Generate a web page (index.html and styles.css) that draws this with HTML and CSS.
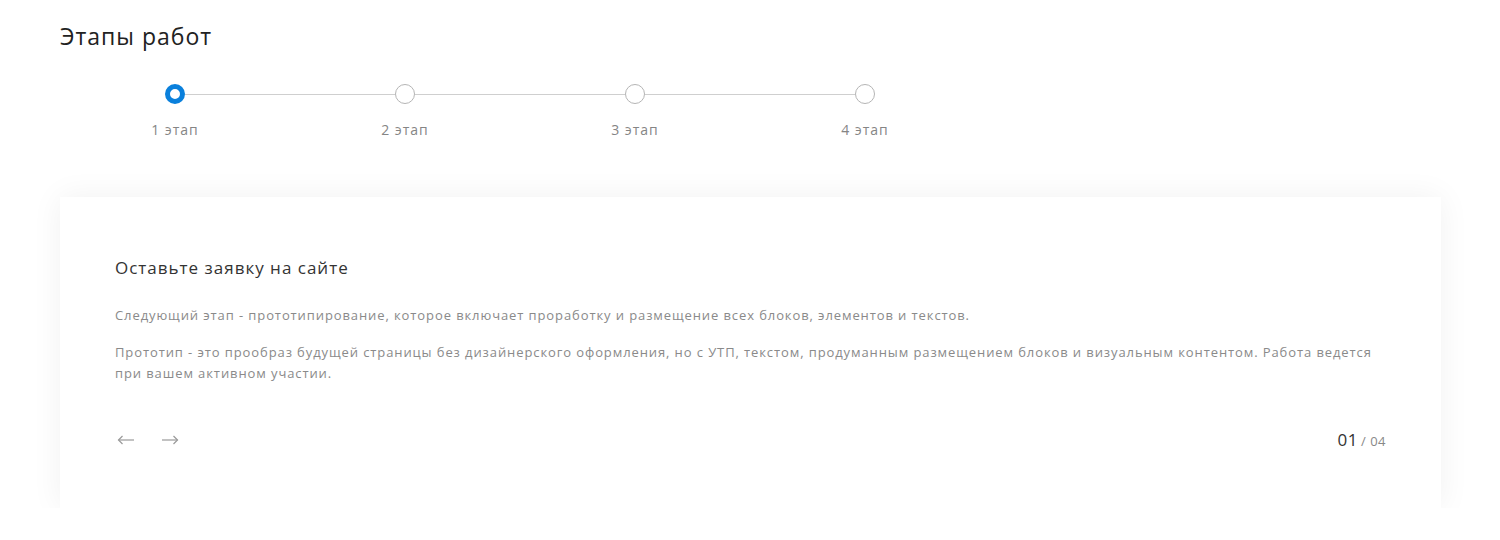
FILE: index.html
```html
<!DOCTYPE html>
<html lang="ru">

<head>
    <meta charset="UTF-8">
    <meta name="viewport" content="width=device-width, initial-scale=1.0">
    <title>Этапы работ</title>
    <link rel="stylesheet" href="styles.css">
</head>

<body>
    <section class="stages">
        <h2 class="stagesTitle">Этапы работ</h2>

        <div class="stepper">
            <div class="step active">
                <span class="stepDot"></span>
                <span class="stepLabel">1 этап</span>
            </div>
            <div class="step">
                <span class="stepDot"></span>
                <span class="stepLabel">2 этап</span>
            </div>
            <div class="step">
                <span class="stepDot"></span>
                <span class="stepLabel">3 этап</span>
            </div>
            <div class="step last">
                <span class="stepDot"></span>
                <span class="stepLabel">4 этап</span>
            </div>
        </div>

        <div class="stageCard">
            <h3 class="cardTitle">Оставьте заявку на сайте</h3>
            <p class="cardText">Следующий этап - прототипирование, которое включает проработку и размещение всех блоков, элементов и текстов.</p>
            <p class="cardText">Прототип - это прообраз будущей страницы без дизайнерского оформления, но с УТП, текстом, продуманным размещением блоков и визуальным контентом. Работа ведется при вашем активном участии.</p>

            <div class="cardFooter">
                <div class="arrows">
                    <button class="arrowBtn" aria-label="Назад">
                        <svg width="18" height="10" viewBox="0 0 18 10" fill="none" stroke="#9a9a9a" stroke-width="1.2">
                            <path d="M17 5H1.5"/>
                            <path d="M5.5 1L1.5 5l4 4"/>
                        </svg>
                    </button>
                    <button class="arrowBtn" aria-label="Вперед">
                        <svg width="18" height="10" viewBox="0 0 18 10" fill="none" stroke="#9a9a9a" stroke-width="1.2">
                            <path d="M1 5h15.5"/>
                            <path d="M12.5 1l4 4-4 4"/>
                        </svg>
                    </button>
                </div>
                <div class="counter"><span class="counterCurrent">01</span><span class="counterTotal">/ 04</span></div>
            </div>
        </div>
    </section>
</body>

</html>
```

FILE: styles.css
```css
body {
    margin: 0;
    font-family: 'Open Sans', 'Noto Sans', sans-serif;
    background-color: #fff;
    color: #333;
}

.stages {
    padding: 22px 59px 0 60px;
}

.stagesTitle {
    margin: 0;
    font-size: 23px;
    font-weight: 400;
    line-height: 28px;
    color: #222;
    letter-spacing: 1px;
}

.stepper {
    display: grid;
    grid-template-columns: repeat(4, 230px);
    margin: 34px 0 0 0;
}

.step {
    display: flex;
    flex-direction: column;
    align-items: center;
    position: relative;
}

.step::after {
    content: '';
    position: absolute;
    top: 10px;
    left: calc(50% + 10px);
    width: 210px;
    height: 1px;
    background-color: #cfcfcf;
}

.step.last::after {
    display: none;
}

.stepDot {
    width: 18px;
    height: 18px;
    border: 1px solid #b5b5b5;
    border-radius: 50%;
    background-color: #fff;
    box-sizing: content-box;
}

.step.active .stepDot {
    width: 10px;
    height: 10px;
    border: 5px solid #0a80dc;
}

.stepLabel {
    margin-top: 17px;
    font-size: 14px;
    color: #858585;
    line-height: 18px;
    letter-spacing: 1px;
}

.stageCard {
    margin-top: 58px;
    padding: 60px 55px 57px 55px;
    background-color: #fff;
    box-shadow: 0 0 30px rgba(0, 0, 0, 0.06);
}

.cardTitle {
    margin: 0 0 26px 0;
    font-size: 17px;
    font-weight: 400;
    line-height: 22px;
    color: #333;
    letter-spacing: 1px;
}

.cardText {
    margin: 0 0 16px 0;
    font-size: 13px;
    line-height: 21px;
    color: #8a8a8a;
    letter-spacing: 0.9px;
}

.cardFooter {
    display: flex;
    justify-content: space-between;
    align-items: center;
    margin-top: 44px;
}

.arrows {
    display: flex;
    gap: 26px;
    margin-left: 2px;
}

.arrowBtn {
    padding: 0;
    border: none;
    background: none;
    cursor: pointer;
    line-height: 0;
}

.counter {
    color: #333;
}

.counterCurrent {
    font-size: 17px;
    letter-spacing: 0.5px;
    margin-right: 3px;
}

.counterTotal {
    font-size: 13px;
    color: #888;
    letter-spacing: 0.5px;
}
```
